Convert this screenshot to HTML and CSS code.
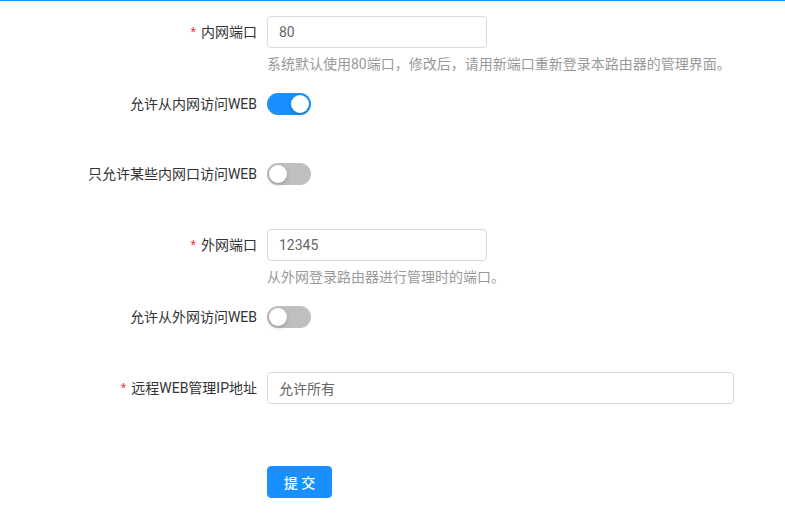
FILE: index.html
```html
<!DOCTYPE html>
<html lang="zh-CN">
<head>
<meta charset="utf-8">
<title>WEB管理设置</title>
<link rel="stylesheet" href="styles.css">
</head>
<body>
<div class="page">
  <form class="form">
    <div class="item item-input">
      <label class="label"><span class="req">*</span>内网端口</label>
      <div class="control">
        <input class="input input-short" type="text" value="80">
        <div class="extra">系统默认使用80端口，修改后，请用新端口重新登录本路由器的管理界面。</div>
      </div>
    </div>

    <div class="item item-switch item-switch-a">
      <label class="label">允许从内网访问WEB</label>
      <div class="control">
        <span class="switch on"><span class="knob"></span></span>
      </div>
    </div>

    <div class="item item-switch">
      <label class="label">只允许某些内网口访问WEB</label>
      <div class="control">
        <span class="switch"><span class="knob"></span></span>
      </div>
    </div>

    <div class="item item-input">
      <label class="label"><span class="req">*</span>外网端口</label>
      <div class="control">
        <input class="input input-short" type="text" value="12345">
        <div class="extra">从外网登录路由器进行管理时的端口。</div>
      </div>
    </div>

    <div class="item item-switch">
      <label class="label">允许从外网访问WEB</label>
      <div class="control">
        <span class="switch"><span class="knob"></span></span>
      </div>
    </div>

    <div class="item item-last">
      <label class="label"><span class="req">*</span>远程WEB管理IP地址</label>
      <div class="control">
        <input class="input input-long" type="text" value="允许所有">
      </div>
    </div>

    <div class="item">
      <div class="label"></div>
      <div class="control">
        <button class="btn" type="button">提 交</button>
      </div>
    </div>
  </form>
</div>
</body>
</html>
```

FILE: styles.css
```css
html, body {
  margin: 0;
  padding: 0;
  background: #fff;
}

body {
  font-family: Roboto, "Noto Sans CJK SC", sans-serif;
  font-size: 14px;
  color: #333;
}

.page {
  border-top: 1px solid #1890ff;
  width: 785px;
  height: 512px;
  box-sizing: border-box;
}

.form {
  padding-top: 15px;
}

.item {
  display: flex;
  align-items: flex-start;
}

.item-input {
  margin-bottom: 13px;
}

.item-switch {
  margin-bottom: 39px;
}

.item-switch-a {
  margin-bottom: 38px;
}

.item-last {
  margin-bottom: 62px;
}

.label {
  flex: 0 0 267px;
  box-sizing: border-box;
  padding-right: 10px;
  text-align: right;
  height: 32px;
  line-height: 32px;
  color: #333;
  white-space: nowrap;
}

.req {
  color: #f5222d;
  font-family: "Liberation Sans", sans-serif;
  margin-right: 5px;
}

.control {
  display: flex;
  flex-direction: column;
  min-height: 32px;
  justify-content: flex-start;
}

.input {
  box-sizing: border-box;
  height: 32px;
  padding: 0 11px;
  border: 1px solid #d9d9d9;
  border-radius: 4px;
  font-family: Roboto, "Noto Sans CJK SC", sans-serif;
  font-size: 14px;
  color: #666;
  background: #fff;
  outline: none;
  margin: 0;
}

.input-short {
  width: 220px;
}

.input-long {
  width: 467px;
}

.extra {
  padding-top: 5px;
  line-height: 22px;
  color: #999;
  white-space: nowrap;
}

.switch {
  position: relative;
  display: inline-block;
  width: 44px;
  height: 22px;
  margin-top: 5px;
  border-radius: 11px;
  background: #bfbfbf;
}

.switch.on {
  background: #1890ff;
}

.knob {
  position: absolute;
  top: 2px;
  left: 2px;
  width: 18px;
  height: 18px;
  border-radius: 50%;
  background: #fff;
  box-shadow: 0 2px 4px rgba(0, 35, 11, 0.2);
}

.switch.on .knob {
  left: 24px;
}

.btn {
  box-sizing: border-box;
  width: 65px;
  height: 32px;
  padding: 0 15px;
  border: 1px solid #1890ff;
  border-radius: 4px;
  background: #1890ff;
  color: #fff;
  font-family: Roboto, "Noto Sans CJK SC", sans-serif;
  font-size: 14px;
  font-weight: 500;
  cursor: pointer;
}
```
